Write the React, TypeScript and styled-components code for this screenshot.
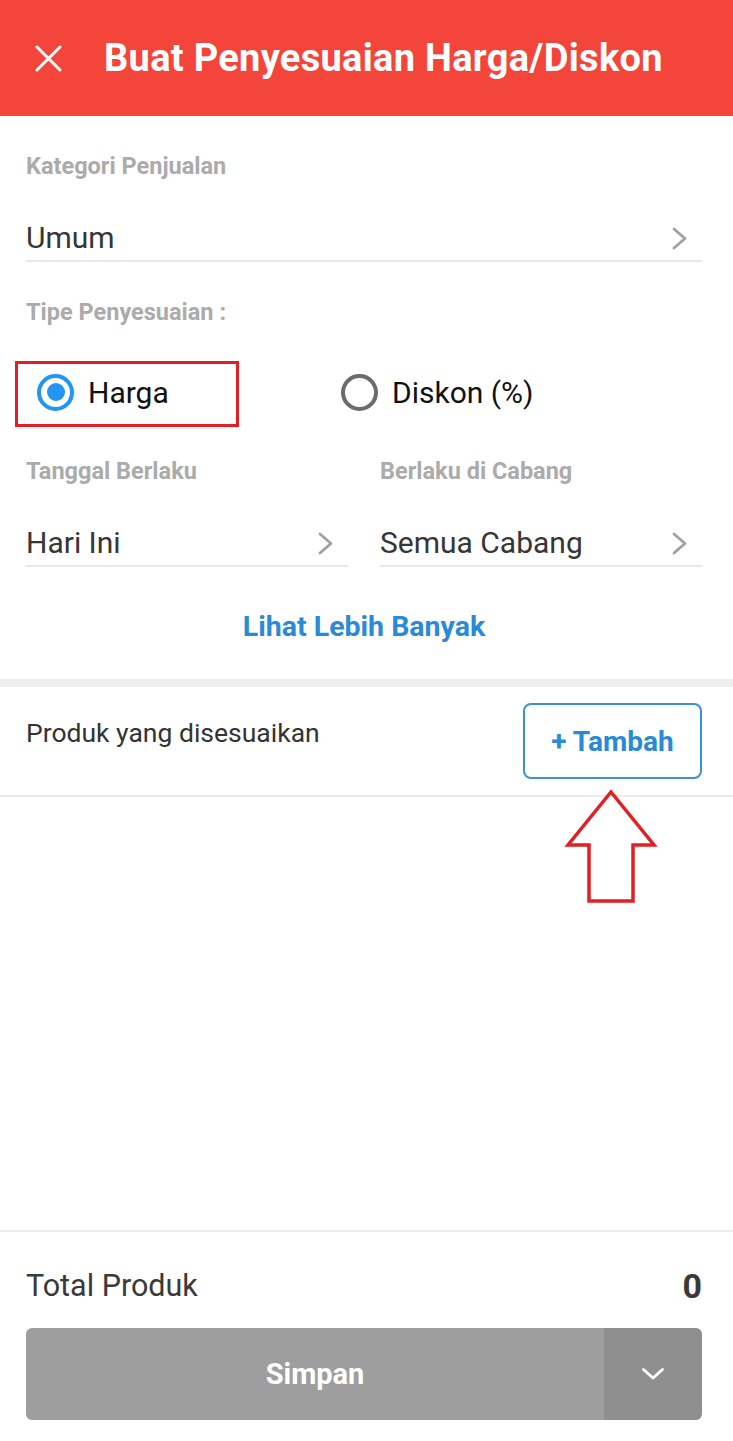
import React from "react";
import styled, { createGlobalStyle } from "styled-components";

const GlobalStyle = createGlobalStyle`
  html, body { margin: 0; padding: 0; background: #ffffff; }
  body { font-family: Roboto, "Noto Sans", sans-serif; }
  * { box-sizing: border-box; }
`;

const Page = styled.div`
  width: 733px;
  min-height: 1441px;
  display: flex;
  flex-direction: column;
  background: #fff;
`;

const Header = styled.header`
  height: 116px;
  background: #f4453a;
  display: flex;
  align-items: center;
  padding-left: 35px;
  gap: 42px;
  color: #fff;
`;

const Title = styled.h1`
  margin: 0;
  font-size: 38px;
  font-weight: 700;
  letter-spacing: 0.3px;
`;

const Form = styled.section`
  padding: 35px 31px 32px 26px;
  display: flex;
  flex-direction: column;
`;

const Label = styled.div<{ $top?: number }>`
  font-size: 23.5px;
  line-height: 30px;
  font-weight: 700;
  color: #ababab;
  margin-top: ${(p) => p.$top ?? 0}px;
`;

const Field = styled.div`
  display: flex;
  align-items: center;
  justify-content: space-between;
  padding: 37px 15px 2px 0;
  border-bottom: 2px solid #e8e8e8;
  font-size: 30px;
  line-height: 40px;
  color: #363636;
`;

const RadioRow = styled.div`
  display: flex;
  align-items: center;
  height: 64px;
  margin-top: 33px;
`;

const RadioOption = styled.div<{ $width?: number }>`
  position: relative;
  display: flex;
  align-items: center;
  gap: 14px;
  padding-left: 11px;
  width: ${(p) => (p.$width ? `${p.$width}px` : "auto")};
  font-size: 30px;
  color: #111;
`;

const Circle = styled.span<{ $on?: boolean }>`
  width: 37px;
  height: 37px;
  border-radius: 50%;
  border: 4.5px solid ${(p) => (p.$on ? "#2196f3" : "#6b6b6b")};
  display: flex;
  align-items: center;
  justify-content: center;
  &::after {
    content: "";
    width: 18px;
    height: 18px;
    border-radius: 50%;
    background: ${(p) => (p.$on ? "#2196f3" : "transparent")};
  }
`;

const Highlight = styled.div`
  position: absolute;
  left: -11px;
  top: -13px;
  width: 224px;
  height: 66px;
  border: 3.5px solid #e31e24;
  pointer-events: none;
`;

const Columns = styled.div`
  display: grid;
  grid-template-columns: 1fr 1fr;
  column-gap: 32px;
  margin-top: 32px;
`;

const Column = styled.div`
  display: flex;
  flex-direction: column;
`;

const MoreLink = styled.div`
  margin-top: 40px;
  text-align: center;
  font-size: 28.5px;
  line-height: 40px;
  font-weight: 700;
  color: #2b8ad6;
`;

const Band = styled.div`
  height: 8px;
  background: #eeeeee;
`;

const ProductRow = styled.div`
  position: relative;
  display: flex;
  justify-content: space-between;
  align-items: flex-start;
  padding: 16px 31px 16px 26px;
  border-bottom: 2px solid #ececec;
`;

const ProductText = styled.div`
  margin-top: 12px;
  font-size: 26.5px;
  line-height: 36px;
  color: #333;
`;

const AddButton = styled.button`
  width: 179px;
  height: 76px;
  border: 2px solid #3d90d3;
  border-radius: 8px;
  background: #fff;
  color: #2b8ad6;
  font-family: inherit;
  font-size: 28px;
  font-weight: 700;
  padding: 0;
`;

const Arrow = styled.svg`
  position: absolute;
  left: 565px;
  top: 102px;
  width: 92px;
  height: 116px;
  overflow: visible;
`;

const Spacer = styled.div`
  flex: 1;
`;

const Footer = styled.footer`
  border-top: 2px solid #ececec;
  padding: 34px 31px 21px 26px;
  display: flex;
  flex-direction: column;
`;

const TotalRow = styled.div`
  display: flex;
  justify-content: space-between;
  align-items: center;
  line-height: 40px;
`;

const TotalLabel = styled.span`
  font-size: 30.5px;
  color: #3a3a3a;
`;

const TotalValue = styled.span`
  font-size: 34px;
  font-weight: 700;
  color: #3a3a3a;
`;

const SaveGroup = styled.div`
  margin-top: 22px;
  height: 92px;
  display: flex;
  border-radius: 6px;
  overflow: hidden;
`;

const SaveButton = styled.div`
  flex: 1;
  background: #9e9e9e;
  color: #fff;
  font-size: 29px;
  font-weight: 700;
  display: flex;
  align-items: center;
  justify-content: center;
`;

const DropButton = styled.div`
  width: 98px;
  background: #8f8f8f;
  display: flex;
  align-items: center;
  justify-content: center;
`;

const Chevron = () => (
  <svg width="15" height="23" viewBox="0 0 15 23" fill="none">
    <path d="M2 2 L13 11.5 L2 21" stroke="#a0a0a0" strokeWidth="2.8" strokeLinecap="round" strokeLinejoin="round" />
  </svg>
);

export default function App() {
  return (
    <Page>
      <GlobalStyle />
      <Header>
        <svg width="27" height="27" viewBox="0 0 27 27">
          <path d="M2 2 L25 25 M25 2 L2 25" stroke="#fff" strokeWidth="3" strokeLinecap="round" />
        </svg>
        <Title>Buat Penyesuaian Harga/Diskon</Title>
      </Header>

      <Form>
        <Label>Kategori Penjualan</Label>
        <Field>
          <span>Umum</span>
          <Chevron />
        </Field>

        <Label $top={35}>Tipe Penyesuaian :</Label>
        <RadioRow>
          <RadioOption $width={304}>
            <Highlight />
            <Circle $on />
            <span>Harga</span>
          </RadioOption>
          <RadioOption>
            <Circle />
            <span>Diskon (%)</span>
          </RadioOption>
        </RadioRow>

        <Columns>
          <Column>
            <Label>Tanggal Berlaku</Label>
            <Field>
              <span>Hari Ini</span>
              <Chevron />
            </Field>
          </Column>
          <Column>
            <Label>Berlaku di Cabang</Label>
            <Field>
              <span>Semua Cabang</span>
              <Chevron />
            </Field>
          </Column>
        </Columns>

        <MoreLink>Lihat Lebih Banyak</MoreLink>
      </Form>

      <Band />

      <ProductRow>
        <ProductText>Produk yang disesuaikan</ProductText>
        <AddButton>+ Tambah</AddButton>
        <Arrow viewBox="0 0 92 116">
          <polygon
            points="46,3 89,56 68,56 68,112 24,112 24,56 3,56"
            fill="none"
            stroke="#e31e24"
            strokeWidth="3.5"
            strokeLinejoin="miter"
          />
        </Arrow>
      </ProductRow>

      <Spacer />

      <Footer>
        <TotalRow>
          <TotalLabel>Total Produk</TotalLabel>
          <TotalValue>0</TotalValue>
        </TotalRow>
        <SaveGroup>
          <SaveButton>Simpan</SaveButton>
          <DropButton>
            <svg width="24" height="14" viewBox="0 0 24 14">
              <path d="M2.5 2.5 L12 11 L21.5 2.5" stroke="#fff" strokeWidth="3" fill="none" strokeLinecap="round" strokeLinejoin="round" />
            </svg>
          </DropButton>
        </SaveGroup>
      </Footer>
    </Page>
  );
}
